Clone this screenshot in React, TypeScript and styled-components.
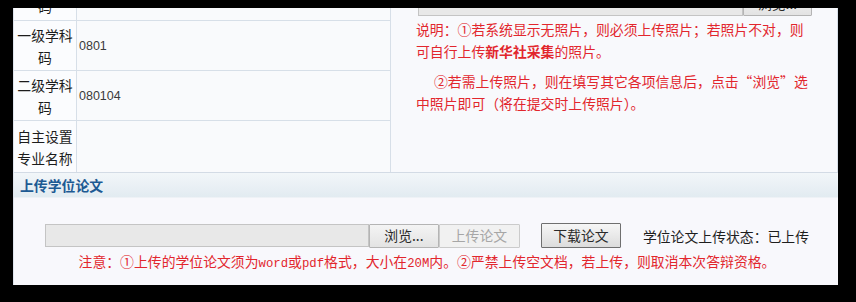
import styled, { createGlobalStyle } from "styled-components";

const GlobalStyle = createGlobalStyle`
  html, body {
    margin: 0;
    padding: 0;
    background: #000;
  }
  body {
    font-family: "Noto Sans CJK SC", "Liberation Sans", sans-serif;
  }
`;

const Frame = styled.div`
  width: 856px;
  height: 302px;
  box-sizing: border-box;
  padding: 8px 18px 17px 13px;
  background: #000;
`;

const Panel = styled.div`
  width: 825px;
  height: 277px;
  overflow: hidden;
  background: #f7f8fc;
  border-left: 1px solid #dde3ec;
  box-sizing: border-box;
  display: flex;
  flex-direction: column;
`;

// the form is scrolled: only the bottom of the first row shows
const InfoArea = styled.div`
  display: flex;
  margin-top: -38px;
  border-bottom: 1px solid #d3dbe5;
`;

const LeftTable = styled.div`
  width: 376px;
  display: flex;
  flex-direction: column;
`;

const Row = styled.div<{ $h: number; $last?: boolean }>`
  display: flex;
  height: ${(p) => p.$h}px;
  border-bottom: ${(p) => (p.$last ? "none" : "1px solid #d7dfe8")};
`;

const Label = styled.div`
  width: 62px;
  flex: none;
  display: flex;
  align-items: center;
  justify-content: center;
  text-align: center;
  font-size: 13.85px;
  line-height: 22px;
  color: #1c1c1c;
  background: #fbfcfe;
  border-right: 1px solid #d7dfe8;
`;

const Value = styled.div`
  flex: 1;
  display: flex;
  align-items: center;
  padding-left: 2px;
  font-family: "Liberation Sans", sans-serif;
  font-size: 12.5px;
  color: #3a3a3a;
  background: #f9fafc;
`;

const PhotoCell = styled.div`
  flex: 1;
  border-left: 1px solid #d7dfe8;
  border-right: 1px solid #d7dfe8;
  padding: 22px 0 0 25px;
  background: #f8f9fc;
`;

const PhotoInputRow = styled.div`
  display: flex;
  align-items: flex-end;
  margin-left: 2px;
`;

const FileField = styled.div<{ $w: number }>`
  width: ${(p) => p.$w}px;
  height: 23px;
  box-sizing: border-box;
  background: #e8e8e8;
  border: 1px solid #c4c4c4;
`;

const Btn = styled.button<{ $w: number; $disabled?: boolean; $strong?: boolean }>`
  width: ${(p) => p.$w}px;
  height: ${(p) => (p.$strong ? 25 : 24)}px;
  box-sizing: border-box;
  padding: 0;
  font-family: "Noto Sans CJK SC", "Liberation Sans", sans-serif;
  font-size: 13.85px;
  line-height: 1;
  color: ${(p) => (p.$disabled ? "#a6a6a6" : "#2a2a2a")};
  border: 1px solid ${(p) => (p.$strong ? "#6f6f6f" : p.$disabled ? "#cbcbcb" : "#b4b4b4")};
  background: ${(p) =>
    p.$strong
      ? "linear-gradient(#f6f6f6, #dcdcdc)"
      : p.$disabled
      ? "#f1f1f1"
      : "linear-gradient(#f4f4f4, #e3e3e3)"};
  border-radius: 1px;
`;

const Note = styled.div`
  color: #e2262d;
  font-size: 13.85px;
  line-height: 22px;
  margin-top: 2px;
`;

const NotePara = styled.p<{ $indent?: boolean }>`
  margin: 0 0 8px;
  text-indent: ${(p) => (p.$indent ? "18px" : "0")};
  white-space: nowrap;
`;

const Strong = styled.b`
  font-weight: 700;
`;

const SectionHeader = styled.div`
  height: 24px;
  display: flex;
  align-items: center;
  padding-left: 6px;
  font-size: 13.85px;
  font-weight: 700;
  color: #1d5a93;
  background: linear-gradient(#f2f6f9, #e2ebf1);
  border-bottom: 1px solid #eef2f6;
`;

const SectionBody = styled.div`
  flex: 1;
  display: flex;
  flex-direction: column;
  align-items: center;
  padding: 25px 0 0 2px;
  background: #f8f8fc;
`;

const UploadRow = styled.div`
  display: flex;
  align-items: center;
`;

const Spacer = styled.div<{ $w: number }>`
  width: ${(p) => p.$w}px;
`;

const Status = styled.span`
  font-size: 13.85px;
  color: #1e1e1e;
`;

const Warning = styled.div`
  margin-top: 2px;
  color: #e2262d;
  font-size: 13.85px;
  line-height: 22px;
  white-space: nowrap;
`;

const Latin = styled.span`
  font-family: "Liberation Mono", monospace;
  font-size: 12.3px;
`;

const rows = [
  { label: ["学科门类", "码"], value: "", h: 50 },
  { label: ["一级学科", "码"], value: "0801", h: 49 },
  { label: ["二级学科", "码"], value: "080104", h: 49 },
  { label: ["自主设置", "专业名称"], value: "", h: 51 },
];

const App = () => {
  return (
    <>
      <GlobalStyle />
      <Frame>
        <Panel>
          <InfoArea>
            <LeftTable>
              {rows.map((r, i) => (
                <Row key={i} $h={r.h} $last={i === rows.length - 1}>
                  <Label>
                    {r.label[0]}
                    <br />
                    {r.label[1]}
                  </Label>
                  <Value>{r.value}</Value>
                </Row>
              ))}
            </LeftTable>
            <PhotoCell>
              <PhotoInputRow>
                <FileField $w={325} />
                <Btn $w={69}>浏览...</Btn>
              </PhotoInputRow>
              <Note>
                <NotePara>
                  说明：①若系统显示无照片，则必须上传照片；若照片不对，则
                  <br />
                  可自行上传<Strong>新华社采集</Strong>的照片。
                </NotePara>
                <NotePara $indent>
                  ②若需上传照片，则在填写其它各项信息后，点击“浏览”选
                  <br />
                  中照片即可（将在提交时上传照片）。
                </NotePara>
              </Note>
            </PhotoCell>
          </InfoArea>
          <SectionHeader>上传学位论文</SectionHeader>
          <SectionBody>
            <UploadRow>
              <FileField $w={324} />
              <Btn $w={70}>浏览...</Btn>
              <Btn $w={81} $disabled>
                上传论文
              </Btn>
              <Spacer $w={21} />
              <Btn $w={80} $strong>
                下载论文
              </Btn>
              <Spacer $w={22} />
              <Status>学位论文上传状态：已上传</Status>
            </UploadRow>
            <Warning>
              注意：①上传的学位论文须为<Latin>word</Latin>或<Latin>pdf</Latin>格式，大小在
              <Latin>20M</Latin>内。②严禁上传空文档，若上传，则取消本次答辩资格。
            </Warning>
          </SectionBody>
        </Panel>
      </Frame>
    </>
  );
};

export default App;
